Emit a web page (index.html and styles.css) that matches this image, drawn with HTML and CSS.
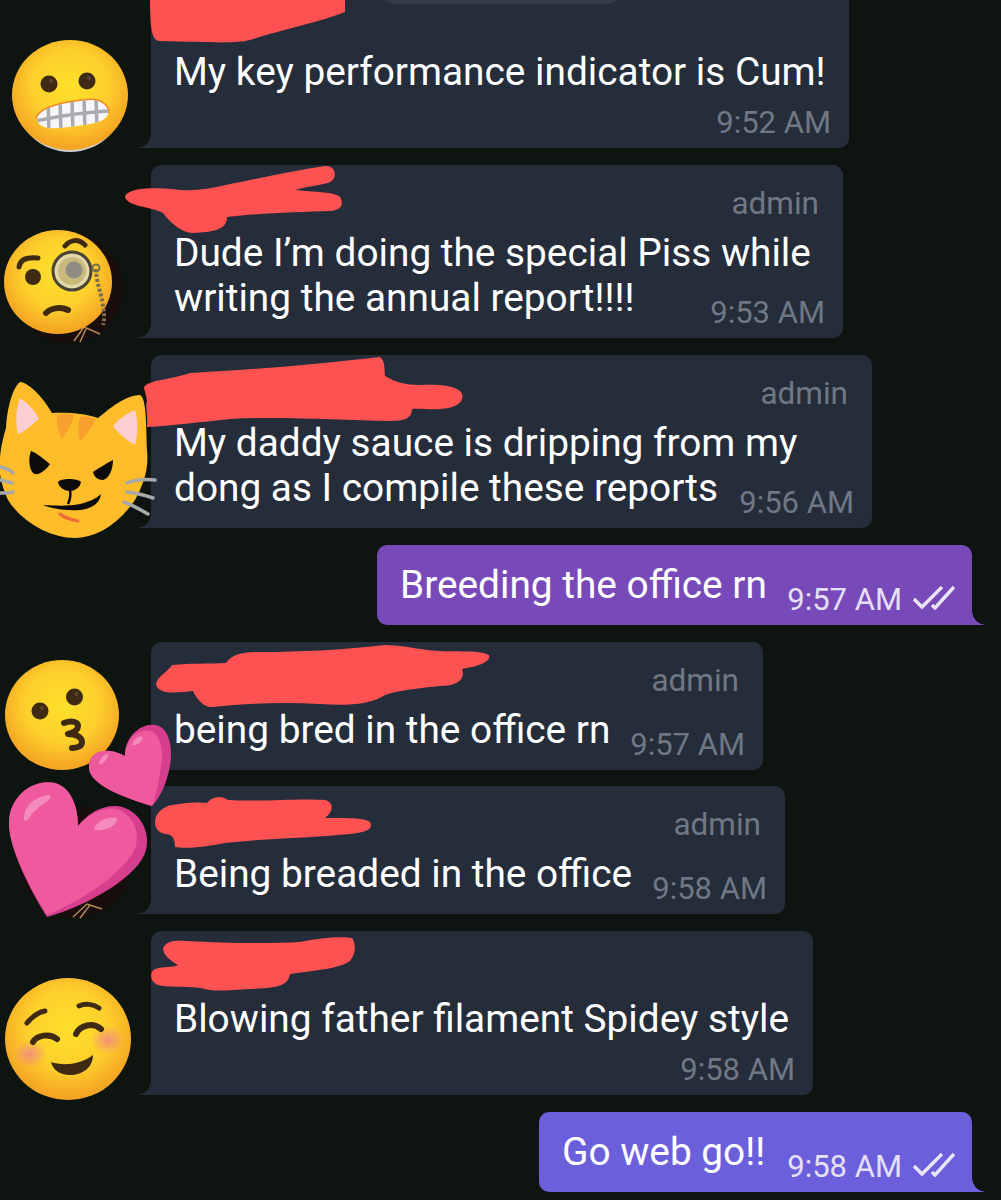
FILE: index.html
```html
<!DOCTYPE html>
<html lang="en">

<head>
  <meta charset="UTF-8">
  <title>Chat</title>
  <link rel="stylesheet" href="styles.css">
</head>

<body>
  <div class="chat">
    <div class="msg msg-kpi">
      <div class="pill"></div>
      <div class="name"></div>
      <div class="row row-stacked">
        <p class="text">My key performance indicator is Cum!</p>
        <span class="time">9:52 AM</span>
      </div>
    </div>

    <div class="msg msg-piss">
      <div class="name">admin</div>
      <div class="row">
        <p class="text">Dude I’m doing the special Piss while<br>writing the annual report!!!!</p>
        <span class="time">9:53 AM</span>
      </div>
    </div>

    <div class="msg msg-sauce">
      <div class="name">admin</div>
      <div class="row">
        <p class="text">My daddy sauce is dripping from my<br>dong as I compile these reports</p>
        <span class="time">9:56 AM</span>
      </div>
    </div>

    <div class="msg msg-out msg-purple">
      <div class="row row-out">
        <p class="text">Breeding the office rn</p>
        <span class="time">9:57 AM</span>
        <svg class="ticks" viewBox="0 0 42 25"><path d="M1 14l8 8L29 2M19 20l3 3L41 2"/></svg>
      </div>
    </div>

    <div class="msg msg-bred">
      <div class="name">admin</div>
      <div class="row">
        <p class="text">being bred in the office rn</p>
        <span class="time">9:57 AM</span>
      </div>
    </div>

    <div class="msg msg-breaded">
      <div class="name">admin</div>
      <div class="row">
        <p class="text">Being breaded in the office</p>
        <span class="time">9:58 AM</span>
      </div>
    </div>

    <div class="msg msg-spidey">
      <div class="name"></div>
      <div class="row row-stacked">
        <p class="text">Blowing father filament Spidey style</p>
        <span class="time">9:58 AM</span>
      </div>
    </div>

    <div class="msg msg-out msg-blue">
      <div class="row row-out">
        <p class="text">Go web go!!</p>
        <span class="time">9:58 AM</span>
        <svg class="ticks" viewBox="0 0 42 25"><path d="M1 14l8 8L29 2M19 20l3 3L41 2"/></svg>
      </div>
    </div>
  </div>

  <!-- stickers and scribbles drawn on top of the chat, page coordinates -->
  <svg class="marks" viewBox="0 0 1001 1200">
    <defs>
      <radialGradient id="face" cx="50%" cy="42%" r="55%">
        <stop offset="0" stop-color="#ffe02a"/>
        <stop offset="0.6" stop-color="#fdcf2c"/>
        <stop offset="1" stop-color="#f5a623"/>
      </radialGradient>
      <radialGradient id="blush">
        <stop offset="0" stop-color="#f28a86" stop-opacity="0.9"/>
        <stop offset="1" stop-color="#f28a86" stop-opacity="0"/>
      </radialGradient>
      <clipPath id="teeth-shape">
        <path d="M37 119C38 109 62 102 90 100C102 100 108 106 108 113C108 120 96 124 76 126C56 129 39 131 37 119Z"/>
      </clipPath>
    </defs>

    <!-- scribbles -->
    <g class="scribble">
      <path d="M150 -2H345V12C320 22 280 30 250 40C235 44 210 42 160 41C152 41 150 30 150 -2Z"/>
      <path d="M125 197C127 188 150 187 172 189C190 192 210 189 230 184C262 178 295 170 325 166C337 165 338 180 328 183C315 186 305 187 295 190C315 192 335 192 340 197C344 204 342 210 330 211C300 212 260 213 227 217C227 228 218 232 192 233C180 232 170 222 163 213C150 206 128 207 125 197Z"/>
      <path d="M144 388C146 380 170 380 190 373C250 370 320 364 380 357C386 362 384 370 385 376C395 382 405 385 420 385C435 384 455 385 461 392C466 400 458 408 440 409C430 410 420 408 412 409C412 418 405 421 390 421C340 420 280 416 230 419C200 422 170 426 147 427C148 415 145 405 147 401C146 395 145 392 144 388Z"/>
      <path d="M156 685C157 676 168 672 172 665C190 663 210 664 226 663C232 655 240 652 260 652C300 652 340 650 385 645C410 646 425 651 440 651C460 652 480 650 489 655C491 662 480 666 462 669C465 678 460 686 440 686C420 688 400 690 385 695C370 705 345 706 320 704C285 702 250 703 212 707C205 708 197 700 193 691C180 692 160 696 156 685Z"/>
      <path d="M155 822C155 812 165 806 172 805C188 802 200 802 207 803C212 796 222 795 228 800C260 802 300 798 325 800C335 803 333 812 325 818C340 818 365 817 370 822C374 830 365 832 350 834C310 838 270 838 225 843C205 847 185 849 175 847C175 838 172 834 165 834C158 832 155 828 155 822Z"/>
      <path d="M163 949C165 942 172 940 185 941C225 943 265 944 300 942C320 938 340 936 352 938C357 945 355 955 350 961C340 968 320 970 290 974C288 985 280 988 250 989C230 990 215 992 205 989C195 986 170 988 158 985C150 982 149 972 155 969C165 966 172 968 178 965C170 960 164 956 163 949Z"/>
    </g>

    <!-- grimacing -->
    <g>
      <ellipse cx="70" cy="97" rx="55" ry="55" fill="#cfcfcf"/>
      <ellipse cx="70" cy="95" rx="58" ry="55" fill="url(#face)"/>
      <circle cx="49" cy="84" r="8.500" fill="#3f2a14"/>
      <circle cx="87" cy="81" r="8.500" fill="#3f2a14"/>
      <circle cx="51" cy="81" r="2" fill="#5a4630"/>
      <circle cx="89" cy="78" r="2" fill="#5a4630"/>
      <path class="lip" d="M37 119C38 109 62 102 90 100C102 100 108 106 108 113"/>
      <g clip-path="url(#teeth-shape)">
        <rect x="34" y="98" width="78" height="34" fill="#f6f6f8"/>
        <path class="teeth" d="M36 121C60 116 85 112 110 111M48 100L49 132M60 100L61 132M72 100L73 132M84 98L85 130M96 98L97 128"/>
      </g>
    </g>

    <!-- monocle -->
    <g>
      <circle cx="68" cy="288" r="55" fill="#1a0d0d"/>
      <path class="gold" d="M74 341L84 327L100 334M80 342L86 329"/>
      <ellipse cx="58" cy="282" rx="54" ry="52" fill="url(#face)"/>
      <path class="dark-line" d="M19 267C20 259 28 257 38 258M65 246C70 240 78 238 85 245"/>
      <circle cx="33" cy="277" r="8" fill="#3f2a14"/>
      <circle cx="72" cy="271" r="19" fill="#e2d8a8" stroke="#4a4436" stroke-width="3"/>
      <circle cx="72" cy="271" r="14" fill="#c9b97c"/>
      <circle cx="74" cy="270" r="8.500" fill="#8f8c82"/>
      <path class="chain" d="M96 269C96 280 100 290 102 300C104 310 105 318 103 325"/>
      <circle cx="96" cy="268" r="3.500" fill="none" stroke="#7a6f50" stroke-width="2"/>
      <path class="dark-line thick" d="M46 313C52 307 62 307 68 310"/>
    </g>

    <!-- cat -->
    <g transform="translate(0 350)">
      <path d="M20 32C30 33 45 50 52 63C66 62 85 63 98 68C108 60 125 45 140 45C147 48 146 80 147 100C149 120 143 135 135 150C118 175 95 188 75 188C50 188 22 172 8 150C1 135 -2 120 0 108C1 95 4 85 6 78C7 60 12 38 20 32Z" fill="#fdbc2a"/>
      <path d="M20 48C26 52 35 60 39 69C32 75 24 82 18 84C15 72 16 58 20 48Z" fill="#fbcfd2"/>
      <path d="M135 60C138 70 138 85 135 95C127 91 117 82 113 76C118 70 127 63 135 60Z" fill="#fbcfd2"/>
      <path d="M57 65C62 63 70 63 74 65C72 72 68 82 62 89C58 82 56 73 57 65ZM80 67C85 66 92 67 96 69C92 76 86 86 80 91C78 84 78 74 80 67Z" fill="#f8a02e"/>
      <path d="M31 101C37 103 45 110 50 114C46 120 40 125 35 124C29 122 28 108 31 101ZM113 110C113 118 110 128 103 130C98 130 94 127 93 122C99 118 107 113 113 110Z" fill="#0c0b0a"/>
      <path d="M58 132C60 128 78 128 81 132C80 138 74 141 70 141C65 141 59 138 58 132Z" fill="#0c0b0a"/>
      <path d="M70 140C71 146 70 150 68 154" fill="none" stroke="#0c0b0a" stroke-width="2.500"/>
      <path d="M43 155C60 156 70 156 80 154C88 152 96 149 101 144C100 153 92 159 80 160C68 161 52 159 43 155Z" fill="#0c0b0a"/>
      <path d="M60 164C65 168 72 170 78 171" fill="none" stroke="#f0693c" stroke-width="3" stroke-linecap="round"/>
      <path class="whisker" d="M127 133C135 130 145 129 155 130M127 142C135 143 145 145 153 148M124 152C132 155 141 160 148 164M0 117C5 118 10 120 13 123M0 130C4 131 8 132 12 133M0 143C4 143 9 143 13 142"/>
    </g>

    <!-- kissing -->
    <g>
      <ellipse cx="62" cy="715" rx="57" ry="55" fill="url(#face)"/>
      <circle cx="40" cy="711" r="8.500" fill="#3f2a14"/>
      <circle cx="74.500" cy="697" r="8.500" fill="#3f2a14"/>
      <circle cx="42" cy="708" r="2" fill="#5a4630"/>
      <circle cx="76.500" cy="694" r="2" fill="#5a4630"/>
      <path class="dark-line thick" d="M64 723C72 720 78 722 78 726C78 731 72 733 68 734C76 734 82 737 82 742C82 747 76 748 72 748"/>
    </g>

    <!-- hearts -->
    <g>
      <circle cx="75" cy="862" r="56" fill="#1a0d0d"/>
      <path class="gold" d="M73 917L87 904L102 909M80 918L90 905"/>
      <path d="M152 806C125 798 90 785 89 768C88 752 105 745 125 756C125 735 142 723 155 725C170 727 173 750 170 765C167 785 158 800 152 806Z" fill="#d63f8e"/>
      <path d="M152 806C125 798 90 785 89 768C88 752 105 745 125 756C125 738 140 728 150 731C160 733 164 750 161 765C159 782 156 796 152 806Z" fill="#ef5a9f"/>
      <path d="M132 745C134 738 140 735 143 737C143 741 138 746 132 745ZM99 764C100 758 104 754 108 754C108 758 104 765 99 764Z" fill="#f48bbc"/>
      <path d="M47 917C30 890 10 850 9 825C8 795 35 778 55 783C70 787 78 805 78 826C90 810 110 802 125 808C143 815 150 835 146 850C140 875 90 905 47 917Z" fill="#d63f8e"/>
      <path d="M47 915C30 888 10 850 9 825C8 795 35 778 55 783C70 787 78 805 78 826C90 812 108 805 120 810C134 817 139 832 136 846C128 868 90 897 47 915Z" fill="#ef5a9f"/>
      <path d="M24 820C23 806 36 796 50 795C54 800 36 806 30 817C28 820 26 822 24 820ZM94 830C95 822 108 816 117 818C118 825 106 832 94 830Z" fill="#f48bbc"/>
    </g>

    <!-- smiling -->
    <g>
      <ellipse cx="68" cy="1039" rx="63" ry="61" fill="url(#face)"/>
      <ellipse cx="30" cy="1054" rx="17" ry="14" fill="url(#blush)"/>
      <ellipse cx="108" cy="1040" rx="17" ry="14" fill="url(#blush)"/>
      <path class="dark-line" d="M27 1023C32 1017 38 1012 45 1011M79 1006C85 1003 93 1004 99 1008"/>
      <path class="dark-line thick" d="M33 1042C37 1035 50 1033 57 1039M76 1034C80 1025 93 1022 101 1029"/>
      <path d="M51 1062C62 1066 80 1065 93 1055C93 1068 82 1075 70 1075C60 1075 53 1070 51 1062Z" fill="#3f2a14"/>
    </g>
  </svg>
</body>

</html>
```

FILE: styles.css
```css
body {
  margin: 0;
  width: 1001px;
  height: 1200px;
  overflow: hidden;
  position: relative;
  background-color: #0e1510;
  font-family: Roboto, "Liberation Sans", sans-serif;
}

.chat {
  display: flex;
  flex-direction: column;
  gap: 17px;
  margin-top: -16px;
}

/* Message bubbles */
.msg {
  position: relative;
  box-sizing: border-box;
  margin-left: 151px;
  padding: 18px 18px 4px 23px;
  background-color: #252d3b;
  border-radius: 10px 10px 10px 0;
}

/* Bubble tail */
.msg::before {
  content: "";
  position: absolute;
  left: -14px;
  bottom: 0;
  width: 14px;
  height: 14px;
  background: radial-gradient(circle at 0 0, transparent 13.500px, #252d3b 14px);
}

.msg-out {
  align-self: flex-end;
  margin-left: 0;
  margin-right: 29px;
  border-radius: 10px 10px 0 10px;
}

.msg-out::before {
  left: auto;
  right: -14px;
  background: radial-gradient(circle at 100% 0, transparent 13.500px, var(--bubble) 14px);
}

.msg-purple {
  --bubble: #7749b9;
  width: 595px;
  background-color: var(--bubble);
}

.msg-blue {
  --bubble: #6b5fdc;
  width: 433px;
  background-color: var(--bubble);
}

.msg-kpi { width: 698px; }
.msg-piss { width: 692px; }
.msg-sauce { width: 721px; }
.msg-bred { width: 612px; }
.msg-breaded { width: 634px; margin-top: -1px; }
.msg-spidey { width: 662px; }

/* Bar peeking in at the top of the first bubble */
.pill {
  position: absolute;
  left: 233px;
  top: 0;
  width: 234px;
  height: 20px;
  background-color: #333d4a;
  border-radius: 0 0 10px 10px;
}

.name {
  height: 40px;
  margin-bottom: 8px;
  padding-right: 6px;
  text-align: right;
  font-size: 31.500px;
  line-height: 42px;
  color: #6f7884;
}

.row {
  display: flex;
  justify-content: space-between;
  align-items: flex-end;
}

.row-stacked {
  flex-direction: column;
  align-items: stretch;
}

.row-stacked .text {
  flex: none;
  padding-bottom: 1px;
}

.row-stacked .time {
  align-self: flex-end;
  margin-top: 6px;
}

.text {
  flex: 1;
  min-width: 0;
  margin: -1px 0 0;
  padding-bottom: 14px;
  font-size: 38.800px;
  line-height: 45px;
  color: #fff;
  white-space: nowrap;
}

.time {
  flex: none;
  font-size: 31px;
  line-height: 43px;
  color: #6f7884;
  white-space: nowrap;
}

.row-out .time {
  color: #e6e0f5;
}

.ticks {
  flex: none;
  width: 42px;
  height: 25px;
  margin: 0 -1px 11px 11px;
  fill: none;
  stroke: #e9e4f6;
  stroke-width: 3.400;
}

/* Stickers and scribbles */
.marks {
  position: absolute;
  left: 0;
  top: 0;
  width: 1001px;
  height: 1200px;
}

.scribble {
  fill: #fe5252;
}

.teeth {
  fill: none;
  stroke: #a9a9b2;
  stroke-width: 3.500;
}

.lip {
  fill: none;
  stroke: #f0852a;
  stroke-width: 3;
}

.dark-line {
  fill: none;
  stroke: #3f2a14;
  stroke-width: 5;
  stroke-linecap: round;
  stroke-linejoin: round;
}

.dark-line.thick {
  stroke-width: 6;
}

.gold {
  fill: none;
  stroke: #b08a58;
  stroke-width: 1.500;
}

.chain {
  fill: none;
  stroke: #7a6f50;
  stroke-width: 4;
  stroke-dasharray: 3 2;
}

.whisker {
  fill: none;
  stroke: #a8a8a8;
  stroke-width: 3.500;
  stroke-linecap: round;
}
```
